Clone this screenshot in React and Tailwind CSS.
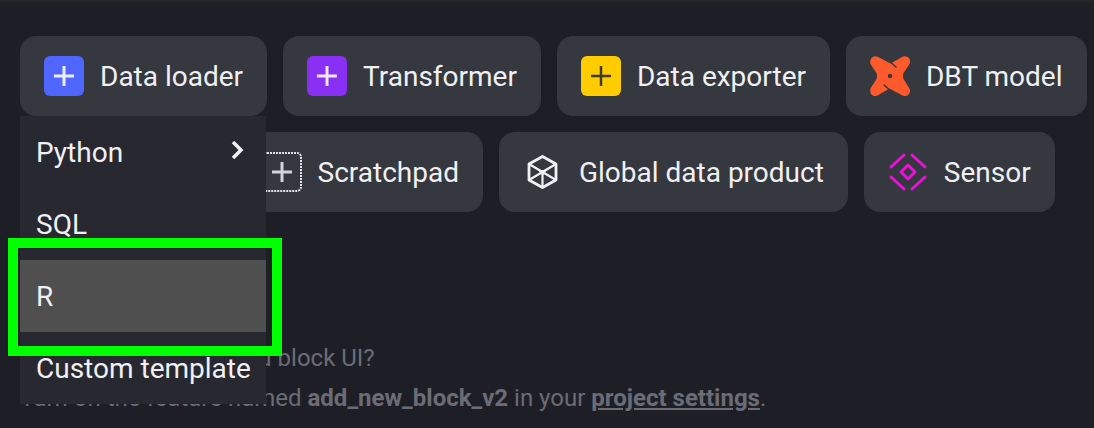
import React from 'react'

const PlusIcon = ({ className, strokeWidth = 3 }) => (
  <svg viewBox="0 0 40 40" className={className} fill="none" stroke="currentColor" strokeWidth={strokeWidth} aria-hidden="true">
    <path d="M20 10v20M10 20h20" />
  </svg>
)

const DbtIcon = () => (
  <svg viewBox="0 0 40 40" className="size-10" aria-hidden="true">
    <path
      fill="#ff5a2c"
      d="M7 0.500L20.500 7.500L33 0.500Q36.500-0.500 39 2Q41 4.500 39.500 8L33.500 17Q32.500 20 33.500 23L39.500 32.500Q41 36 38.500 38.500Q36 41 32.500 39.500L19.500 32.500L7.500 39.500Q4 41 1.500 38.500Q-0.500 36 0.500 32.500L6.500 23Q7.500 20 6.500 17L0.500 8Q-0.500 4.500 1.500 2Q4-0.500 7 0.500z"
    />
    <path d="M21.500 7L26 11M18.500 33L14 29" stroke="#36383f" strokeWidth="1.500" strokeLinecap="round" />
    <circle cx="20" cy="20" r="2.200" fill="#36383f" />
  </svg>
)

const ScratchpadIcon = () => (
  <svg viewBox="0 0 40 40" className="size-10" fill="none" stroke="#e4e5ea" aria-hidden="true">
    <rect x="1" y="1" width="38" height="38" rx="4" strokeWidth="2" strokeDasharray="2 1" />
    <path d="M20 10v20M10 20h20" stroke="#d3d4d9" strokeWidth="3" />
  </svg>
)

const GlobalDataIcon = () => (
  <svg viewBox="0 0 40 40" className="size-10" fill="none" stroke="#f2f2f5" strokeWidth="2.800" strokeLinejoin="round" aria-hidden="true">
    <path d="M19.500 4.500L33 12v16l-13.500 7.500L6 28V12z" />
    <path d="M6 12l13.500 8L33 12M6 28l13.500-8L33 28M19.500 20v15" strokeWidth="2.200" />
    <path d="M16 18.500h7L19.500 23z" fill="#f2f2f5" strokeWidth="1" />
  </svg>
)

const SensorIcon = () => (
  <svg viewBox="0 0 40 40" className="size-10" fill="none" stroke="#eb10d8" strokeWidth="3" strokeLinecap="round" aria-hidden="true">
    <path d="M3 15L16 3M24 3l13 12M3 25l13 12M24 37l13-12" />
    <path d="M20 13l7 7-7 7-7-7z" strokeLinejoin="round" />
  </svg>
)

const blocks = [
  { name: 'Data loader', icon: <PlusIcon className="size-10 rounded-md bg-[#4f66ff] text-[#eceeff]" />, menu: true },
  { name: 'Transformer', icon: <PlusIcon className="size-10 rounded-md bg-[#8a30f5] text-[#f3e8ff]" /> },
  { name: 'Data exporter', icon: <PlusIcon className="size-10 rounded-md bg-[#ffcc00] text-[#40391c]" strokeWidth={2.5} /> },
  { name: 'DBT model', icon: <DbtIcon /> },
  { name: 'Custom', icon: <PlusIcon className="size-10 rounded-md bg-[#4f66ff] text-[#eceeff]" /> },
  { name: 'Scratchpad', icon: <ScratchpadIcon /> },
  { name: 'Global data product', icon: <GlobalDataIcon /> },
  { name: 'Sensor', icon: <SensorIcon /> },
]

const menuItems = [
  { name: 'Python', submenu: true },
  { name: 'SQL' },
  { name: 'R', active: true },
  { name: 'Custom template' },
]

const BlockMenu = () => (
  <ul className="absolute left-0 right-px top-full z-10 bg-[#282930]">
    {menuItems.map((item) => (
      <li key={item.name} className="relative">
        <button
          type="button"
          className={`flex h-18 w-full items-center justify-between whitespace-nowrap px-4 pt-0.5 text-left ${
            item.active ? 'bg-[#4f4f4f]' : ''
          }`}
        >
          {item.name}
          {item.submenu && (
            <svg viewBox="0 0 24 24" className="size-6" fill="none" stroke="currentColor" strokeWidth="3.500" aria-hidden="true">
              <path d="M7 1l8 8-8 8" />
            </svg>
          )}
        </button>
        {item.active && (
          <div className="pointer-events-none absolute -bottom-6 -left-3 -right-4 -top-5.5 border-10 border-[#00ff00]" />
        )}
      </li>
    ))}
  </ul>
)

const App = () => {
  return (
    <div className="min-h-screen border-t-2 border-[#242527] bg-[#1e1f26] font-['Roboto',sans-serif] text-[28px] leading-10 text-[#f0f0f3]">
      <main className="pb-2 pl-5 pr-1 pt-8.5">
        <div className="flex flex-wrap gap-4">
          {blocks.map((block) => (
            <div key={block.name} className="relative">
              <button type="button" className="flex h-20 items-center gap-4 whitespace-nowrap rounded-2xl bg-[#36383f] px-6">
                {block.icon}
                <span className="pt-0.5">{block.name}</span>
              </button>
              {block.menu && <BlockMenu />}
            </div>
          ))}
        </div>

        <div className="mt-31.5 text-2xl/10 text-[#6b6c75]">
          <p>Want to try the new add block UI?</p>
          <p>
            Turn on the feature named <b>add_new_block_v2</b> in your{' '}
            <a href="#settings" className="font-bold underline">project settings</a>.
          </p>
        </div>
      </main>
    </div>
  )
}

export default App
